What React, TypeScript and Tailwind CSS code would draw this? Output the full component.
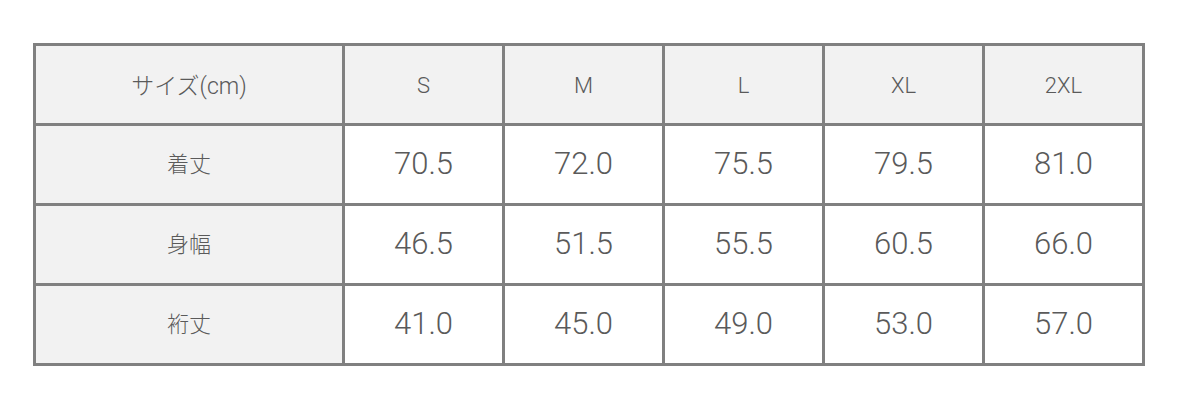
const sizes = ["S", "M", "L", "XL", "2XL"]

const rows = [
  { label: "着丈", values: ["70.5", "72.0", "75.5", "79.5", "81.0"] },
  { label: "身幅", values: ["46.5", "51.5", "55.5", "60.5", "66.0"] },
  { label: "裄丈", values: ["41.0", "45.0", "49.0", "53.0", "57.0"] },
]

const cell = "border-[3px] border-[#808080] text-center font-light leading-none"

export default function App() {
  return (
    <div className="w-[1190px] h-[408px] bg-white pt-[43px] pl-[33px] font-['Roboto','Noto_Sans_CJK_JP',sans-serif] text-[#5a5a5a]">
      <table className="border-collapse table-fixed w-[1111px]">
        <colgroup>
          <col className="w-[309px]" />
          <col className="w-[160px]" />
          <col className="w-[160px]" />
          <col className="w-[160px]" />
          <col className="w-[160px]" />
          <col className="w-[160px]" />
        </colgroup>
        <thead>
          <tr className="h-[80px] bg-[#f2f2f2]">
            <th className={cell + " text-[23px] pt-[3px]"}>サイズ(cm)</th>
            {sizes.map((s) => (
              <th key={s} className={cell + " text-[22px] pt-[3px]"}>
                {s}
              </th>
            ))}
          </tr>
        </thead>
        <tbody>
          {rows.map((r) => (
            <tr key={r.label} className="h-[80px]">
              <td className={cell + " bg-[#f2f2f2] text-[22px]"}>{r.label}</td>
              {r.values.map((v, i) => (
                <td key={i} className={cell + " bg-white text-[31px] pb-[2px]"}>
                  {v}
                </td>
              ))}
            </tr>
          ))}
        </tbody>
      </table>
    </div>
  )
}
